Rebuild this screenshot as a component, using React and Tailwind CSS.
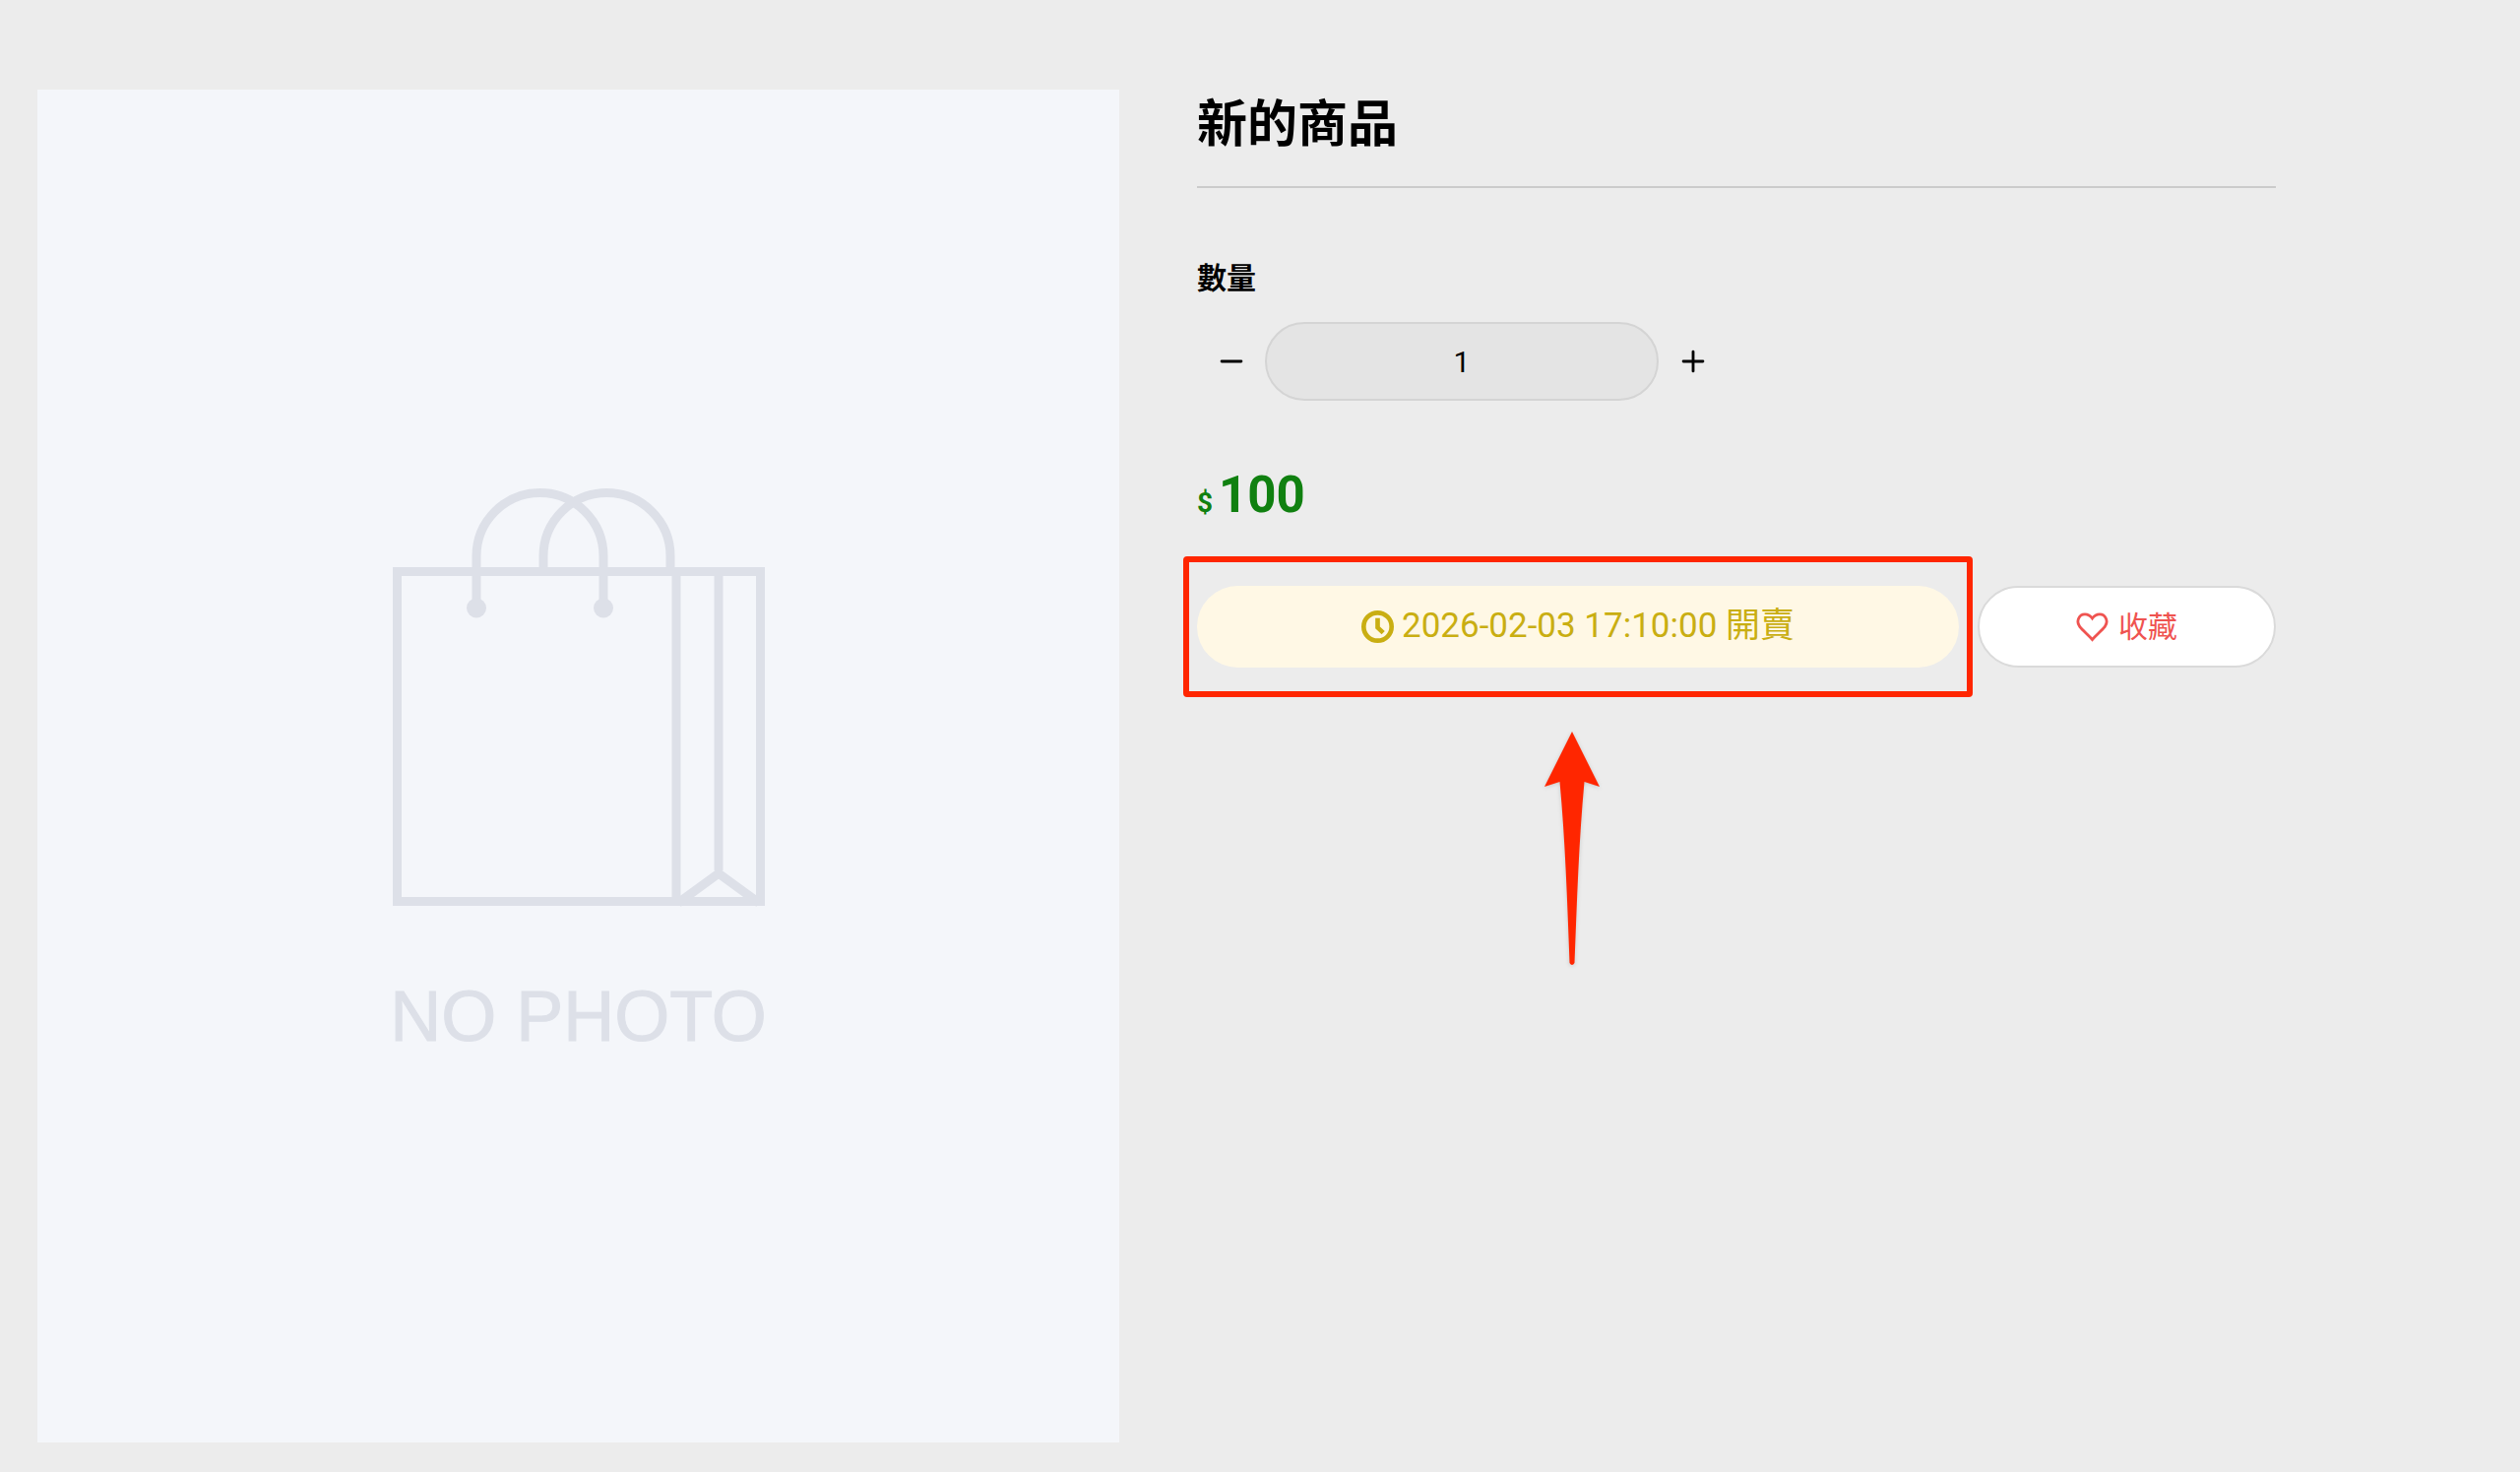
import { useState } from "react";
import { Minus, Plus } from "lucide-react";

// ─────────────────────────────────────────────────────────────
// Icons and drawings
// ─────────────────────────────────────────────────────────────

const ClockIcon = ({ className }) => (
  <svg
    viewBox="0 0 32 32"
    fill="none"
    stroke="currentColor"
    strokeWidth="4.5"
    className={className}
    aria-hidden="true"
  >
    <circle cx="16" cy="16" r="13.75" />
    <path d="M16 7.500v9.300l5.500 5.200" />
  </svg>
);

const HeartIcon = ({ className }) => (
  <svg
    viewBox="0 0 33 30"
    fill="none"
    stroke="currentColor"
    strokeWidth="2.8"
    className={className}
    aria-hidden="true"
  >
    <path d="M16.500 27.500C12.500 22.800 7 18.600 3.700 14.300-.2 9.200 2.800 1.900 9 1.900c3.300 0 5.500 1.300 7.500 4.100 2-2.800 4.200-4.100 7.500-4.100 6.200 0 9.200 7.300 5.300 12.400C26 18.600 20.500 22.800 16.500 27.500Z" />
  </svg>
);

const BagIllustration = ({ className }) => (
  <svg
    viewBox="0 0 378 426"
    fill="none"
    stroke="currentColor"
    strokeWidth="9"
    className={className}
    aria-hidden="true"
  >
    <rect x="4.5" y="84.5" width="369" height="335" />
    <path d="M288 84v336M331 84v304M290 421l41-30 41 30" />
    <path d="M85 118V69a64.5 64.5 0 0 1 129 0v49" />
    <path d="M153 84V69a64.5 64.5 0 0 1 129 0v15" />
    <circle cx="85" cy="121.500" r="10" fill="currentColor" stroke="none" />
    <circle cx="214" cy="121.500" r="10" fill="currentColor" stroke="none" />
  </svg>
);

const PointerArrow = ({ className }) => (
  <svg viewBox="0 0 56 238" className={className} aria-hidden="true">
    <path
      d="M28 0 56 56 40.500 51C35 110 33 170 30.500 235q-2.500 4-5 0C23 170 21 110 15.500 51L0 56Z"
      fill="#ff2600"
    />
  </svg>
);

// Placeholder shown when a product has no photo
const NoPhoto = () => (
  <div className="flex aspect-[4/5] w-full flex-col items-center justify-center bg-[#f4f6fa] pt-[22px] text-[#dde0e8]">
    <BagIllustration className="w-[378px]" />
    <p className="mt-[60px] font-['Liberation_Sans',sans-serif] text-[72px] leading-[100px] [-webkit-text-stroke:1px_currentColor]">
      NO PHOTO
    </p>
  </div>
);

const QuantityPicker = ({ value, onChange }) => (
  <div className="flex items-center">
    <button
      type="button"
      aria-label="減少"
      onClick={() => onChange(Math.max(1, value - 1))}
      className="flex h-20 w-[69px] items-center justify-center"
    >
      <Minus className="h-[34px] w-[34px]" />
    </button>
    <input
      id="quantity"
      type="text"
      inputMode="numeric"
      value={value}
      onChange={(e) => onChange(Number(e.target.value) || 1)}
      className="h-20 w-[400px] rounded-full border-2 border-[#d4d4d4] bg-[#e4e4e4] text-center text-[30px] outline-none"
    />
    <button
      type="button"
      aria-label="增加"
      onClick={() => onChange(value + 1)}
      className="flex h-20 w-[69px] items-center justify-center"
    >
      <Plus className="h-[34px] w-[34px]" />
    </button>
  </div>
);

// ─────────────────────────────────────────────────────────────
// Product page
// ─────────────────────────────────────────────────────────────

const App = () => {
  const [quantity, setQuantity] = useState(1);

  return (
    <main className="grid min-h-screen grid-cols-[1099fr_1096fr] items-start gap-[79px] bg-[#ececec] pt-[91px] pr-[248px] pb-[30px] pl-[38px] font-['Roboto','Noto_Sans_CJK_TC',sans-serif] text-black">
      <NoPhoto />

      <section>
        <h1 className="border-b-2 border-[#cbcbcb] pb-[26px] text-[51px] leading-[72px] font-bold">
          新的商品
        </h1>

        <label
          htmlFor="quantity"
          className="mt-[70px] mb-[22px] block text-[30px] leading-[44px] font-bold"
        >
          數量
        </label>
        <QuantityPicker value={quantity} onChange={setQuantity} />

        <p className="mt-[66px] flex items-baseline gap-1.5 leading-[60px] font-bold text-[#108010]">
          <span className="text-[28px]">$</span>
          <span className="text-[51px]">100</span>
        </p>

        <div className="mt-[54px] flex gap-[19px]">
          <div className="relative flex-1">
            <button
              type="button"
              className="flex h-[83px] w-full items-center justify-center gap-2 rounded-full bg-[#fff8e5] text-[35px] text-[#c9ae12]"
            >
              <ClockIcon className="h-[33px] w-[33px]" />
              2026-02-03 17:10:00 開賣
            </button>
            {/* Highlight frame and arrow over the sale button */}
            <div className="pointer-events-none absolute -inset-x-3.5 -inset-y-[30px] rounded-sm border-[6px] border-[#ff2600]" />
            <PointerArrow className="pointer-events-none absolute top-[148px] left-[353px] w-14 drop-shadow-sm" />
          </div>
          <button
            type="button"
            className="flex h-[83px] w-[303px] items-center justify-center gap-2.5 rounded-full border-2 border-[#dadada] bg-white text-[30px] text-[#ef5350]"
          >
            <HeartIcon className="h-[30px] w-[33px]" />
            收藏
          </button>
        </div>
      </section>
    </main>
  );
};

export default App;
